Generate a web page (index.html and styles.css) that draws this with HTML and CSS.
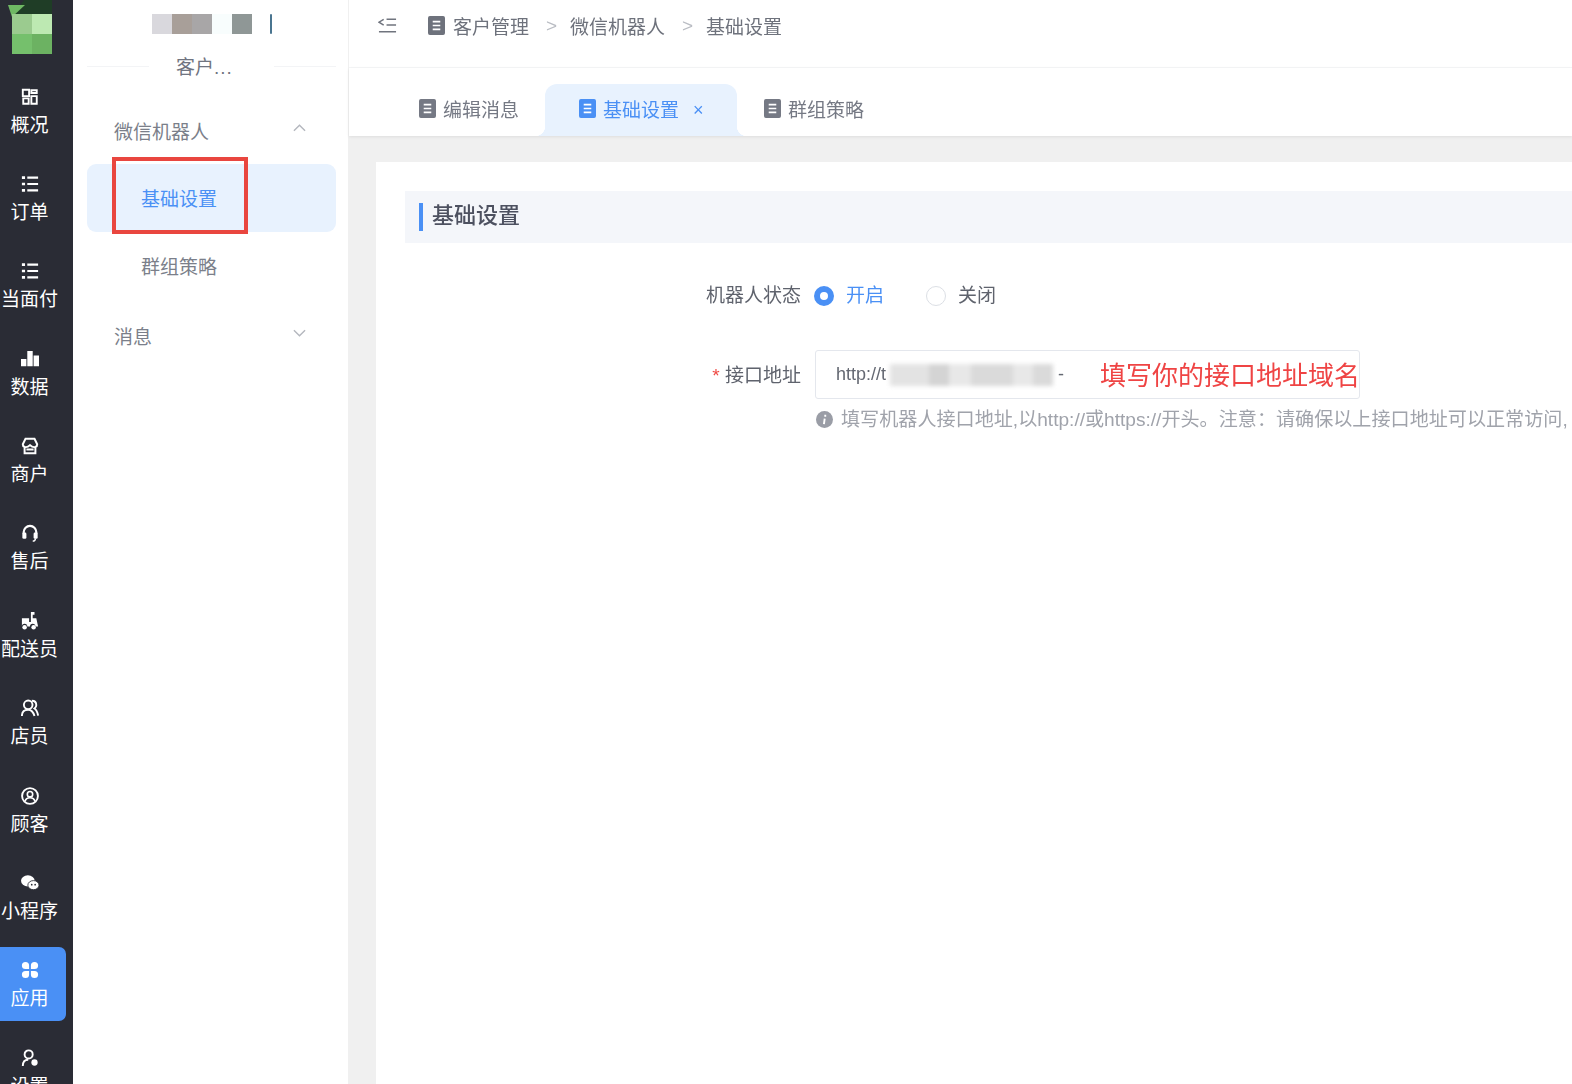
FILE: index.html
```html
<!doctype html>
<html lang="zh-CN">
  <head>
    <meta charset="UTF-8" />
    <title>基础设置</title>
    <link rel="stylesheet" href="styles.css">
  </head>
  <body>
    <svg class="defs" width="0" height="0">
      <symbol id="doc" viewBox="0 0 18 20">
        <rect width="18" height="20" rx="2" fill="currentColor" />
        <path d="M5 6h8M5 10h8M5 14h8" stroke="#fff" stroke-width="1.8" />
      </symbol>
      <symbol id="list" viewBox="0 0 20 20">
        <path d="M7 3h12M7 10h12M7 17h12" stroke="currentColor" stroke-width="2.4" />
        <path d="M1 3h3.500M1 10h3.500M1 17h3.500" stroke="currentColor" stroke-width="3" />
      </symbol>
    </svg>

    <div class="page">
      <aside class="rail">
        <svg class="logo" viewBox="0 0 40 54">
          <path d="M2 14L12 0h28v14z" fill="#1f3d26" />
          <path d="M-4 5h17L0 17z" fill="#6fb764" />
          <rect x="0" y="14" width="20" height="20" fill="#9bcb8f" />
          <rect x="20" y="14" width="20" height="20" fill="#bde9b2" />
          <rect x="0" y="34" width="20" height="20" fill="#75c06c" />
          <rect x="20" y="34" width="20" height="20" fill="#6cb262" />
        </svg>

        <a class="rail-item">
          <svg viewBox="0 0 20 20"><path d="M2 2h7v7H2zM11.500 2.500h6v3h-6zM2.500 11.500h6v6h-6zM11.500 9h6v8.500h-6z" fill="none" stroke="#fff" stroke-width="2.100" /></svg>
          <span>概况</span>
        </a>
        <a class="rail-item">
          <svg><use href="#list" /></svg>
          <span>订单</span>
        </a>
        <a class="rail-item">
          <svg><use href="#list" /></svg>
          <span>当面付</span>
        </a>
        <a class="rail-item">
          <svg viewBox="0 0 20 20"><path d="M0 10h6v8H0zM7 1h6v17H7zM14 6h6v12h-6z" fill="#fff" /></svg>
          <span>数据</span>
        </a>
        <a class="rail-item">
          <svg viewBox="0 0 20 20"><path d="M5 2h10l3 6a3 3 0 0 1-2 3v7H4v-7a3 3 0 0 1-2-3z M4 11q3 1 6-2q3 3 6 2 M6 14h8" fill="none" stroke="#fff" stroke-width="2.200" /></svg>
          <span>商户</span>
        </a>
        <a class="rail-item">
          <svg viewBox="0 0 20 20"><path d="M3 11V9a7 7 0 0 1 14 0v2" fill="none" stroke="#fff" stroke-width="2.400" /><rect x="1.500" y="9.500" width="4.500" height="7" rx="1.500" fill="#fff" /><rect x="14" y="9.500" width="4.500" height="7" rx="1.500" fill="#fff" /><path d="M16 16q0 3-3 3" fill="none" stroke="#fff" stroke-width="1.500" /></svg>
          <span>售后</span>
        </a>
        <a class="rail-item">
          <svg viewBox="0 0 20 20"><path d="M11 0h4v3h-2v4h4l2 9h-3a3 3 0 0 0-6 0H7a3 3 0 0 0-6 0V7h8v4h2z" fill="#fff" /><circle cx="4" cy="17" r="2.500" fill="#fff" /><circle cx="14" cy="17" r="2.500" fill="#fff" /></svg>
          <span>配送员</span>
        </a>
        <a class="rail-item">
          <svg viewBox="0 0 20 20"><circle cx="8" cy="6.500" r="4.800" fill="none" stroke="#fff" stroke-width="2.100" /><path d="M1 19q0-7 7-7q5 0 7 7M12 2q5 0 5 5q0 2-2 3.500q3 2 4 8" fill="none" stroke="#fff" stroke-width="2.100" /></svg>
          <span>店员</span>
        </a>
        <a class="rail-item">
          <svg viewBox="0 0 20 20"><circle cx="10" cy="10" r="8.800" fill="none" stroke="#fff" stroke-width="2.100" /><circle cx="10" cy="8" r="3" fill="none" stroke="#fff" stroke-width="1.800" /><path d="M4.500 16q1-4 5.500-4t5.500 4" fill="none" stroke="#fff" stroke-width="1.800" /></svg>
          <span>顾客</span>
        </a>
        <a class="rail-item">
          <svg viewBox="0 0 21 20"><ellipse cx="8" cy="7.500" rx="8" ry="6.500" fill="#fff" /><ellipse cx="14.500" cy="12.500" rx="6.500" ry="5.300" fill="#fff" stroke="#2a2c35" /><circle cx="12.500" cy="12" r="1" fill="#2a2c35" /><circle cx="16.500" cy="12" r="1" fill="#2a2c35" /></svg>
          <span>小程序</span>
        </a>
        <a class="rail-item is-active">
          <svg viewBox="0 0 20 20"><path d="M5 1a4 4 0 0 1 4 4v4H5a4 4 0 0 1 0-8zM15 1a4 4 0 0 1 0 8h-4V5a4 4 0 0 1 4-4zM5 11h4v4a4 4 0 1 1-4-4zM11 11h4a4 4 0 1 1-4 4z" fill="#fff" /></svg>
          <span>应用</span>
        </a>
        <a class="rail-item">
          <svg viewBox="0 0 20 20"><circle cx="8.500" cy="6" r="4.500" fill="none" stroke="#fff" stroke-width="2.100" /><path d="M2 19q0-7 6-7" fill="none" stroke="#fff" stroke-width="2.100" /><circle cx="15" cy="15" r="3.500" fill="#fff" /></svg>
          <span>设置</span>
        </a>
      </aside>

      <nav class="side">
        <div class="brand">
          <div class="mosaic">
            <i class="m1"></i><i class="m2"></i><i class="m3"></i><i class="m4"></i><i class="m5"></i>
            <b class="brand-tick"></b>
          </div>
          <div class="brand-name">客户<span class="dots">...</span></div>
        </div>

        <div class="side-group">
          <span>微信机器人</span>
          <svg viewBox="0 0 14 8"><path d="M1 7l6-6 6 6" /></svg>
        </div>
        <a class="side-link is-current">基础设置<em class="callout"></em></a>
        <a class="side-link">群组策略</a>
        <div class="side-group">
          <span>消息</span>
          <svg viewBox="0 0 14 8"><path d="M1 1l6 6 6-6" /></svg>
        </div>
      </nav>

      <main class="main">
        <header class="crumbs">
          <svg class="fold" viewBox="0 0 20 16"><path d="M6 1L1 4l5 3M9 1h10M9 7h10M1 14h18" fill="none" stroke="#70747e" stroke-width="1.600" /></svg>
          <svg class="doc"><use href="#doc" /></svg>
          <span>客户管理</span>
          <i class="sep">&gt;</i>
          <span>微信机器人</span>
          <i class="sep">&gt;</i>
          <span>基础设置</span>
        </header>

        <div class="tabs">
          <a class="tab"><svg class="doc"><use href="#doc" /></svg>编辑消息</a>
          <a class="tab is-open"><svg class="doc"><use href="#doc" /></svg>基础设置<i class="tab-close">×</i></a>
          <a class="tab"><svg class="doc"><use href="#doc" /></svg>群组策略</a>
        </div>

        <div class="content">
          <section class="card">
            <h2 class="card-title"><span>基础设置</span></h2>

            <div class="form-row row-status">
              <label class="form-label">机器人状态</label>
              <div class="radios">
                <span class="radio is-on"></span><span class="radio-text is-on">开启</span>
                <span class="radio"></span><span class="radio-text">关闭</span>
              </div>
            </div>

            <div class="form-row row-url">
              <label class="form-label"><i class="req">*</i> 接口地址</label>
              <div class="input">
                <span>http://t</span>
                <div class="smudge"><i></i><i></i><i></i><i></i><i></i><i></i></div>
                <span class="dash">-</span>
                <span class="note">填写你的接口地址域名</span>
              </div>
            </div>

            <div class="hint">
              <svg viewBox="0 0 18 18"><circle cx="9" cy="9" r="9" fill="#9a9da6" /><path d="M9.800 4v2M9.200 8l-.8 6" stroke="#fff" stroke-width="2" /></svg>
              <span>填写机器人接口地址,以http://或https://开头。注意：请确保以上接口地址可以正常访问,</span>
            </div>
          </section>
        </div>
      </main>
    </div>
  </body>
</html>
```

FILE: styles.css
```css
* {
  box-sizing: border-box;
}
html,
body {
  margin: 0;
  height: 100%;
  overflow: hidden;
}
body {
  font-family: "Liberation Sans", "Noto Sans CJK SC", sans-serif;
  font-size: 19px;
  background: #fff;
  color: #6b6f7a;
}
a {
  text-decoration: none;
  color: inherit;
}
i,
em {
  font-style: normal;
}
.defs {
  display: block;
  height: 0;
}
.page {
  display: flex;
  width: 1572px;
  height: 1084px;
  overflow: hidden;
  filter: blur(0.5px);
}

/* dark rail */
.rail {
  width: 73px;
  flex: none;
  background: #2a2c35;
  color: #fff;
}
.logo {
  display: block;
  width: 40px;
  height: 54px;
  margin: 0 0 19.500px 12px;
  overflow: visible;
}
.rail-item {
  display: flex;
  flex-direction: column;
  align-items: center;
  width: 66px;
  height: 74px;
  margin-bottom: 13.400px;
  padding: 14px 7px 0 0;
  border-radius: 0 7px 7px 0;
}
.rail-item svg {
  width: 18px;
  height: 18px;
  flex: none;
}
.rail-item span {
  margin-top: 6px;
  font-size: 19px;
  line-height: 28px;
  white-space: nowrap;
}
.is-active {
  background: #4a90f5;
}

/* second column */
.side {
  width: 275px;
  flex: none;
  padding: 0 12px 0 14px;
  background: #fff;
}
.brand {
  height: 67px;
  margin-bottom: 35px;
  border-bottom: 1px solid #f3f4f6;
  position: relative;
}
.mosaic {
  display: flex;
  padding: 14px 0 0 65px;
  height: 34px;
}
.mosaic i {
  width: 20px;
  height: 20px;
}
.m1 { background: #d9d8dd; }
.m2 { background: #a89f99; }
.m3 { background: #a8a6a7; }
.m4 { background: #f8fdfd; }
.m5 { background: #8f9796; }
.brand-tick {
  width: 2px;
  height: 20px;
  margin-left: 18px;
  background: #4a7590;
  border-radius: 2px;
}
.brand-name {
  position: absolute;
  left: 62px;
  top: 55px;
  width: 125px;
  height: 27px;
  padding-left: 27px;
  background: #fff;
  line-height: 26px;
  font-size: 19px;
  color: #707480;
}
.dots {
  letter-spacing: 1px;
}
.side-group {
  display: flex;
  align-items: center;
  justify-content: space-between;
  height: 56px;
  padding: 0 30px 0 27px;
  color: #7b7f8a;
}
.side-link + .side-group {
  margin-top: 7px;
}
.brand + .side-group {
  margin-bottom: 6px;
}
.side-group svg {
  width: 13px;
  height: 8px;
  margin-bottom: 4px;
  fill: none;
  stroke: #b4b7be;
  stroke-width: 1.500;
}
.side-link {
  display: block;
  position: relative;
  height: 68px;
  padding-left: 54px;
  line-height: 72px;
  color: #7b7f8a;
}
.is-current {
  background: #e8f2fe;
  color: #4a90f5;
  border-radius: 9px;
}
.callout {
  position: absolute;
  left: 25px;
  top: -7px;
  width: 136px;
  height: 77px;
  border: 4px solid #e9463f;
}

/* main column */
.main {
  flex: 1;
  min-width: 0;
  display: flex;
  flex-direction: column;
  border-left: 1px solid #f0f0f0;
}
.crumbs {
  display: flex;
  align-items: center;
  height: 68px;
  flex: none;
  padding: 0 0 16px 29px;
  border-bottom: 1px solid #f5f6f7;
  color: #6e727c;
}
.fold {
  width: 19px;
  height: 16px;
  margin-right: 31px;
}
.doc {
  width: 17px;
  height: 19px;
  flex: none;
  margin-right: 8px;
}
.crumbs .sep {
  width: 41px;
  padding-left: 4px;
  text-align: center;
  color: #b9bcc3;
}
.tabs {
  display: flex;
  align-items: flex-end;
  height: 68px;
  flex: none;
  padding-left: 43px;
  box-shadow: 0 1px 3px rgba(0, 0, 0, 0.08);
  position: relative;
  z-index: 1;
}
.tab {
  display: flex;
  align-items: center;
  height: 52px;
  padding: 0 26px 4px 27px;
  color: #757984;
  position: relative;
}
.tab .doc {
  margin-right: 7px;
}
.is-open {
  width: 192px;
  padding-left: 34px;
  padding-right: 0;
  background: #e8f2fe;
  color: #4a90f5;
  border-radius: 12px 12px 0 0;
}
.is-open::before,
.is-open::after {
  content: "";
  position: absolute;
  bottom: 0;
  width: 10px;
  height: 10px;
}
.is-open::before {
  left: -10px;
  background: radial-gradient(circle at 0 0, transparent 10px, #e8f2fe 10.500px);
}
.is-open::after {
  right: -10px;
  background: radial-gradient(circle at 100% 0, transparent 10px, #e8f2fe 10.500px);
}
.tab-close {
  margin: 4px 0 0 14px;
  font-size: 18px;
}
.content {
  flex: 1;
  min-height: 0;
  padding: 26px 0 0 27px;
  background: #f0f0f0;
}
.card {
  height: 100%;
  padding: 29px 0 0 29px;
  background: #fff;
}
.card-title {
  display: flex;
  align-items: center;
  height: 52px;
  margin: 0 0 27px;
  padding-left: 14px;
  background: #f4f6fa;
  font-size: 22px;
  font-weight: 500;
  color: #4d5160;
}
.card-title span {
  height: 28px;
  padding-left: 9px;
  border-left: 4px solid #4a90f5;
  line-height: 26px;
}

/* form */
.form-row {
  display: flex;
  align-items: center;
}
.row-status {
  height: 50px;
  margin-bottom: 30px;
}
.form-label {
  width: 396px;
  flex: none;
  padding-bottom: 3px;
  text-align: right;
  color: #5f636d;
}
.req {
  color: #ef4b45;
}
.radios {
  display: flex;
  align-items: center;
  margin-left: 13px;
}
.radio {
  width: 20px;
  height: 20px;
  margin-top: 2px;
  border: 1px solid #dcdfe5;
  border-radius: 50%;
}
.radio.is-on {
  border: 6.500px solid #4a90f5;
}
.radio-text {
  margin: 0 42px 0 12px;
  padding-bottom: 3px;
  color: #5f636d;
}
.radio-text.is-on {
  color: #4a90f5;
}
.input {
  display: flex;
  align-items: center;
  width: 545px;
  height: 49px;
  margin-left: 14px;
  padding-left: 20px;
  border: 1px solid #e4e7ed;
  border-radius: 3px;
  font-size: 18px;
  white-space: nowrap;
  color: #646872;
}
.smudge {
  display: flex;
  width: 163px;
  height: 22px;
  margin-left: 4px;
  filter: blur(2px);
}
.smudge i {
  flex: 0 0 20px;
  background: #e3e3e3;
}
.smudge i:nth-child(1) { flex-basis: 39px; }
.smudge i:nth-child(2) { background: #d4d4d4; }
.smudge i:nth-child(3) { flex-basis: 22px; background: #e8e8e8; }
.smudge i:nth-child(4) { flex-basis: 42px; background: #dadada; }
.smudge i:nth-child(5) { background: #e8e8e8; }
.smudge i:nth-child(6) { background: #dadada; }
.dash {
  margin-left: 5px;
}
.note {
  margin-left: 36px;
  padding-bottom: 3px;
  font-size: 26px;
  color: #ef4444;
}
.hint {
  display: flex;
  align-items: center;
  margin: 6px 0 0 411px;
  height: 28px;
  white-space: nowrap;
  font-size: 19.100px;
  color: #a0a3ab;
}
.hint svg {
  width: 17px;
  height: 17px;
  flex: none;
  margin-right: 8px;
}
.hint span {
  padding-bottom: 3px;
}
```
